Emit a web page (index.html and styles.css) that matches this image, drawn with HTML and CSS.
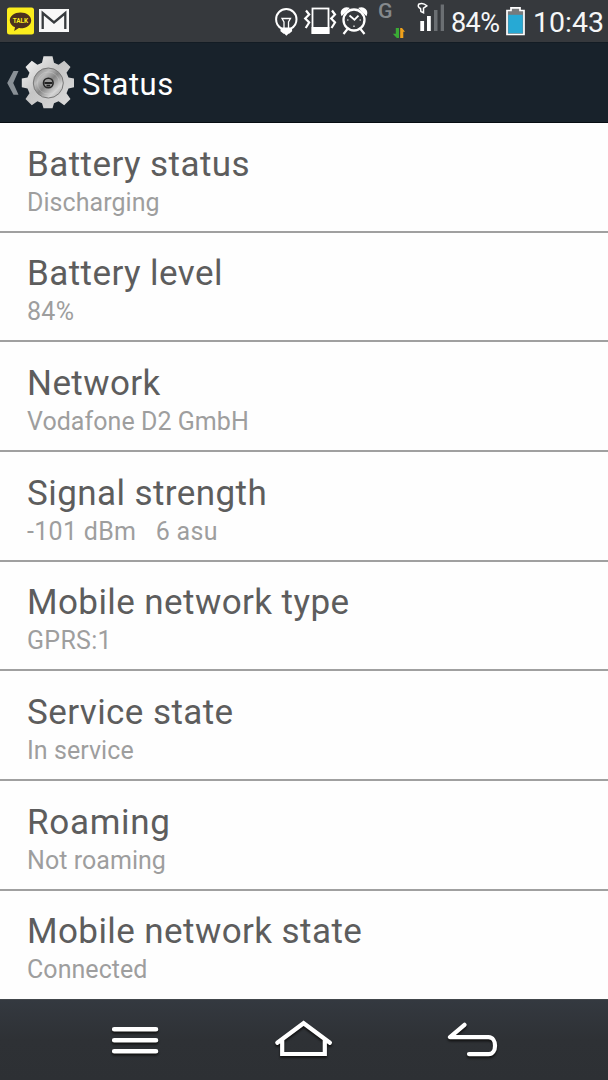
FILE: index.html
```html
<!DOCTYPE html>
<html lang="en">
<head>
<meta charset="utf-8">
<title>Status</title>
<link rel="stylesheet" href="styles.css">
</head>
<body>
<div class="screen">
  <div class="statusbar">
    <svg class="notifications" width="70" height="42" viewBox="0 0 70 42">
      <rect x="7" y="7.500" width="27" height="27" rx="2.500" fill="#fbed1d"/>
      <path d="M20.500 12.500c-6 0-10.700 3.400-10.700 7.900 0 3 2.200 5.500 5.200 6.900l-.8 3.700 4.600-2.900c7.200.7 12.400-3 12.400-7.700 0-4.500-4.700-7.900-10.700-7.900z" fill="#4b3020"/>
      <text class="talk-label" x="20.400" y="23.200" text-anchor="middle" textLength="15.500" lengthAdjust="spacingAndGlyphs">TALK</text>
      <rect x="39" y="9" width="30" height="23" fill="#f8f8f8"/>
      <path d="M42.700 29V13L54 22.500 65.300 13v16" fill="none" stroke="#373b3e" stroke-width="2.300"/>
    </svg>
    <svg class="indicators" width="181" height="42" viewBox="265 0 181 42">
      <g fill="none" stroke="#fff" stroke-width="2">
        <path d="M281.500 28.500c-3.500-2-5.400-4.900-5.400-9.300a10.200 10.200 0 0 1 20.400 0c0 4.400-1.900 7.300-5.400 9.300"/>
        <path d="M284 28v-6l-2-3.500h8.500l-2 3.500v6" stroke-width="1.300"/>
        <path d="M280.500 27.500h11.600v3.700l-3 2.600h-.7l-2 2-2-2h-.8l-3.100-2.600z" fill="#fff" stroke="none"/>
        <rect x="312.500" y="8.500" width="16" height="24.500" stroke-width="1.800"/>
        <path d="M311.600 27h17.800v7h-17.800z" fill="#fff" stroke="none"/>
        <path d="M306 10.500l3.200 4-4 4 4 4-3.500 5.500M332 10.500l3 4-3.800 4 3.800 4-3.500 5.500" stroke-width="2.200"/>
        <circle cx="354" cy="20" r="10.500" stroke-width="2.300"/>
        <path d="M342 14.500a4.700 4.700 0 0 1 6-6zM366 14.500a4.700 4.700 0 0 0-6-6z" fill="#fff"/>
        <path d="M347.500 29l-4 5M360.500 29l4 5" stroke-width="2.200"/>
        <path d="M349.500 15.500l5 4.200 4-4" stroke-width="1.800"/>
        <path d="M347 20h1.500M359.500 20h1.500M354 25.500v1.500" stroke-width="1.200"/>
        <path d="M418.600 4.200c2.600-1.200 6-.6 8.200 1.600l-3.300 2.400v4.600l-2.600-1.200-.4-3.100c-1.700-.8-2.600-2.600-1.900-4.300z" stroke-width="1.500"/>
      </g>
      <text class="network-kind" x="378" y="17.700" textLength="14.500" lengthAdjust="spacingAndGlyphs">G</text>
      <path d="M395.800 28h3.200v10h-2.200l-4-4.200h3z" fill="#3aab35"/>
      <path d="M400.200 38V28h1.800l3 3.800h-1.700V38z" fill="#efa11b"/>
      <path d="M420.300 21h3.800v10h-3.800zM427 16h3.800v15H427z" fill="#fff"/>
      <path d="M434 10h3.500v21H434zM440.700 4.500h3.300V31h-3.300z" fill="#6b6f73"/>
    </svg>
    <span class="battery-percent">84%</span>
    <svg class="battery" width="22" height="32" viewBox="0 0 22 32">
      <path d="M2 5.500h4V2.800h9v2.700h4v24H2z" fill="#777a7c" stroke="#fff" stroke-width="1.700"/>
      <path d="M3.300 9.800h14.400v18.400H3.300z" fill="#27a9d4"/>
    </svg>
    <span class="clock">10:43</span>
  </div>

  <header class="titlebar">
    <svg class="back-gear" width="76" height="80" viewBox="0 43 76 80">
      <defs>
        <linearGradient id="rim" x1="0" y1="0" x2="1" y2="1">
          <stop offset="0" stop-color="#fafafa"/><stop offset=".45" stop-color="#c5c5c5"/><stop offset="1" stop-color="#dedede"/>
        </linearGradient>
        <linearGradient id="disc" x1="0" y1="0" x2="1" y2="1">
          <stop offset="0" stop-color="#777"/><stop offset=".3" stop-color="#bbb"/><stop offset=".5" stop-color="#858585"/><stop offset=".75" stop-color="#d5d5d5"/><stop offset="1" stop-color="#999"/>
        </linearGradient>
      </defs>
      <path d="M13.500 71h5l-5.300 12 5.300 11.800h-5L7.200 83z" fill="#899096"/>
      <path d="M43.500 56.300h9l1.500 6.500 4.600 2 5.600-4 6.300 6.300-4 5.700 2 4.700 5.500 1v8.800l-5.500 1.300-2 4.700 4 5.600-6.300 6.300-5.600-4-4.600 2-1.500 5h-9l-1.500-5-4.600-2-5.600 4-6.300-6.300 4-5.600-2-4.700-5.700-1.300v-8.800l5.700-1 2-4.700-4-5.700 6.300-6.300 5.600 4 4.600-2z" fill="url(#rim)"/>
      <circle cx="48.300" cy="83" r="15" fill="url(#disc)" stroke="#777" stroke-width="1"/>
      <circle cx="48.300" cy="83" r="11" fill="none" stroke="#ddd" stroke-width=".6" opacity=".5"/>
      <circle cx="48.300" cy="83" r="4.800" fill="#999" stroke="#262626" stroke-width="1.600"/>
      <path d="M44.500 83h7.600M46.500 85.700h3.600" stroke="#222" stroke-width="1.800"/>
    </svg>
    <h1 class="title">Status</h1>
  </header>

  <main class="list">
    <section class="row"><h2 class="name">Battery status</h2><p class="value">Discharging</p></section>
    <section class="row"><h2 class="name">Battery level</h2><p class="value wide">84%</p></section>
    <section class="row"><h2 class="name">Network</h2><p class="value">Vodafone D2 GmbH</p></section>
    <section class="row"><h2 class="name">Signal strength</h2><p class="value wide">-101 dBm &nbsp; 6 asu</p></section>
    <section class="row"><h2 class="name">Mobile network type</h2><p class="value wide">GPRS:1</p></section>
    <section class="row"><h2 class="name">Service state</h2><p class="value">In service</p></section>
    <section class="row"><h2 class="name loose">Roaming</h2><p class="value">Not roaming</p></section>
    <section class="row"><h2 class="name">Mobile network state</h2><p class="value">Connected</p></section>
  </main>

  <nav class="navbar">
    <svg class="nav-icon" width="60" height="50" viewBox="105 1015 60 50">
      <path d="M114.200 1029.200h41.800M114.200 1040.200h41.800M114.200 1051.200h41.800"/>
    </svg>
    <svg class="nav-icon" width="60" height="50" viewBox="274 1015 60 50">
      <path class="thin" d="M277.300 1042.800l26.300-19.600 26.300 19.600M282.200 1040v14h42.600v-14"/>
    </svg>
    <svg class="nav-icon" width="60" height="50" viewBox="443 1015 60 50">
      <path class="thin turn" d="M464.500 1024.800L450 1037.200h38.500c8.700 0 8.700 16.900 0 16.900H469"/>
    </svg>
  </nav>
</div>
</body>
</html>
```
FILE: styles.css
```css
* { box-sizing: border-box; }
body { margin: 0; font-family: Roboto, "Liberation Sans", sans-serif; }
.screen { width: 608px; height: 1080px; display: flex; flex-direction: column; overflow: hidden; background: #fefefe; }
.statusbar { height: 42px; flex: none; display: flex; background: #36393d; color: #f5f6f7; }
.statusbar svg { flex: none; }
.talk-label { font-size: 7.500px; font-weight: 700; fill: #fbed1d; }
.indicators { margin-left: 195px; }
.network-kind { font-size: 20px; font-weight: 500; fill: #85898c; }
.battery-percent { width: 54px; padding-left: 5px; font-size: 27px; line-height: 47px; letter-spacing: -.6px; white-space: nowrap; }
.battery { margin: 5px 0 0 5px; }
.clock { margin-left: 6px; font-size: 28.500px; line-height: 46px; letter-spacing: 0; white-space: nowrap; }
.titlebar { height: 81px; flex: none; display: flex; align-items: center; background: #18222b; border-top: 1px solid #131c24; border-bottom: 1px solid #070d13; }
.title { margin: 4px 0 0 6px; font-size: 31px; line-height: 40px; font-weight: 400; letter-spacing: .5px; color: #fff; }
.list { height: 876px; flex: none; overflow: hidden; }
.row { height: 109.7px; padding: 20.600px 27px 0; border-bottom: 2px solid #a0a0a0; }
.row:last-child { border-bottom: 0; }
.name { margin: 0; font-size: 35px; line-height: 42px; font-weight: 400; letter-spacing: .42px; color: #5d5d5d; white-space: nowrap; }
.name.loose { letter-spacing: .7px; }
.value { margin: 0; font-size: 25px; line-height: 34px; font-weight: 400; letter-spacing: .05px; color: #9e9e9e; white-space: nowrap; }
.value.wide { letter-spacing: .3px; }
.navbar { flex: 1; display: flex; align-items: center; gap: 109px; padding-left: 105px; background: linear-gradient(#343940, #2e3135 50%, #2d3034); border-top: 1px solid #42474b; }
.nav-icon { fill: none; stroke: #fff; stroke-width: 4.600; stroke-linecap: round; filter: drop-shadow(0 2px 1px #111); }
.thin { stroke-width: 4.200; stroke-linejoin: miter; }
.turn { stroke-linejoin: round; }
```
